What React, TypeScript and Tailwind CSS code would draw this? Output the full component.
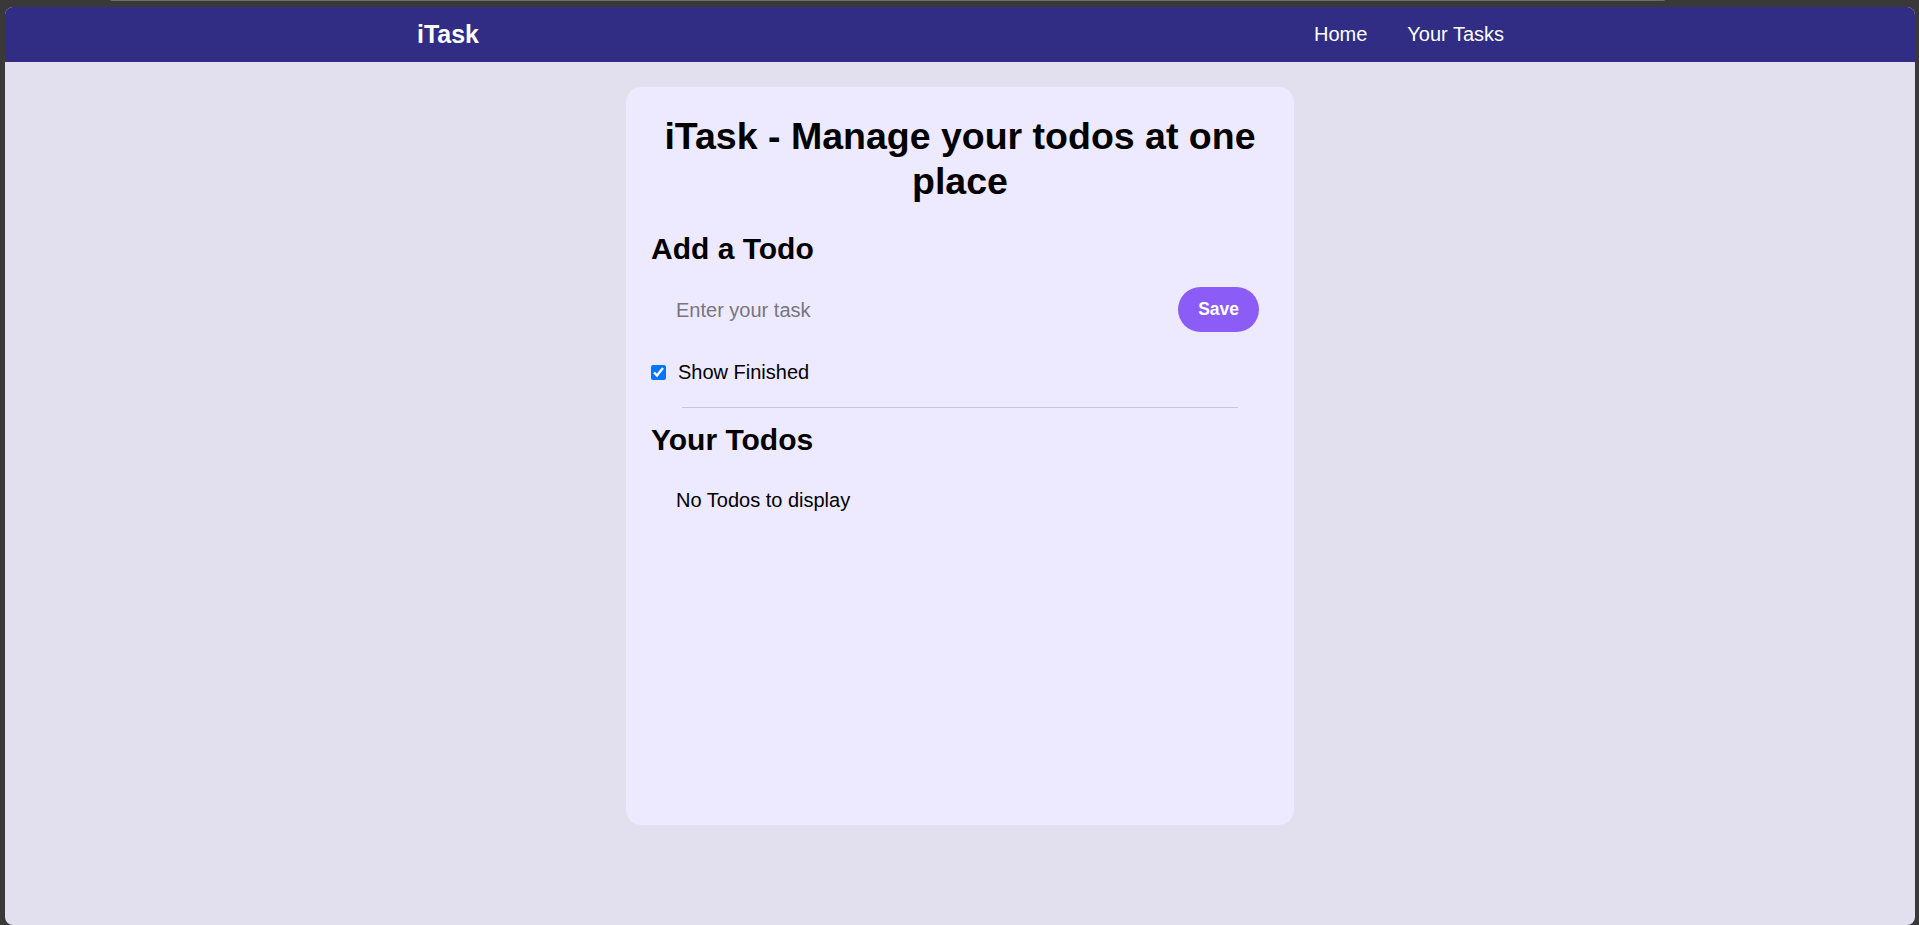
import { useState } from "react";

interface Todo {
  id: number;
  todo: string;
  isCompleted: boolean;
}

function Navbar() {
  return (
    <nav className="flex justify-around items-center bg-[#312d84] text-white py-[10px]">
      <div className="logo">
        <span className="font-bold text-[25px] leading-[35px] mx-[40px]">iTask</span>
      </div>
      <ul className="flex gap-[40px] ml-[51px] mr-[39px] text-[20px] leading-[35px]">
        <li className="cursor-pointer">Home</li>
        <li className="cursor-pointer">Your Tasks</li>
      </ul>
    </nav>
  );
}

export default function App() {
  const [todo, setTodo] = useState("");
  const [todos] = useState<Todo[]>([]);
  const [showFinished, setShowFinished] = useState(true);

  const visible = todos.filter((t) => showFinished || !t.isCompleted);

  return (
    <div
      className="h-[925px] w-full overflow-hidden bg-[#393939] flex flex-col pl-[5px] pr-[4px] text-black"
      style={{ fontFamily: '"Liberation Sans", Arial, sans-serif' }}
    >
      {/* window chrome strip */}
      <div className="h-[7px] shrink-0">
        <div className="ml-[105px] w-[1555px] h-[2px] -mt-px border-b border-x border-[#6d6d6d] rounded-b-[3px]"></div>
      </div>

      <div className="flex-1 rounded-[8px] overflow-hidden bg-[#e2e0ee] flex flex-col">
        <Navbar />

        <div className="mx-auto my-[25px] w-[668px] min-h-[738px] rounded-[15px] p-[25px] bg-[#ede9fe]">
          <h1 className="font-bold text-center text-[37.5px] leading-[45px] pt-[2px] -mb-[2px]">
            iTask - Manage your todos at one place
          </h1>

          <div className="addTodo my-[25px] flex flex-col gap-[20px]">
            <h2 className="text-[30px] leading-[40px] font-bold pt-[2px] -mb-[2px]">Add a Todo</h2>
            <div className="flex">
              <input
                type="text"
                value={todo}
                onChange={(e) => setTodo(e.target.value)}
                placeholder="Enter your task"
                className="w-full rounded-full px-[25px] py-[5px] text-[20px] bg-transparent outline-none placeholder:text-[#77767f]"
              />
              <button
                disabled={todo.length <= 3}
                className="bg-[#8b5cf6] mx-[10px] rounded-full px-[20px] py-[10px] text-[17.5px] leading-[25px] font-bold text-white"
              >
                Save
              </button>
            </div>
          </div>

          <div className="flex items-center h-[30px] mb-[20px]">
            <input
              id="show"
              type="checkbox"
              checked={showFinished}
              onChange={() => setShowFinished(!showFinished)}
              className="w-[15px] h-[15px]"
            />
            <label htmlFor="show" className="ml-[12px] text-[20px]">
              Show Finished
            </label>
          </div>

          <div className="h-px bg-black/15 w-[90%] mx-auto mt-[10px] mb-[12px]"></div>

          <h2 className="text-[30px] leading-[40px] font-bold">Your Todos</h2>
          <div className="todos">
            {visible.length === 0 && (
              <div className="m-[25px] text-[20px] leading-[30px]">No Todos to display</div>
            )}
            {visible.map((item) => (
              <div key={item.id} className="flex my-3 justify-between">
                <div className={item.isCompleted ? "line-through" : ""}>{item.todo}</div>
              </div>
            ))}
          </div>
        </div>
      </div>
    </div>
  );
}
